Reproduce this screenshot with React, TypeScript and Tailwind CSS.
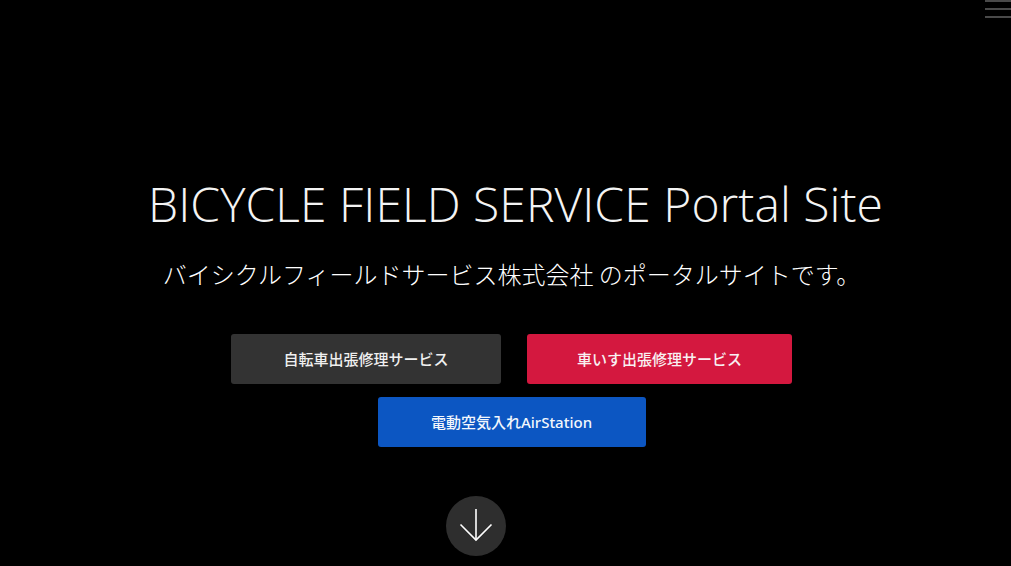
import React from "react";

export default function App() {
  return (
    <div className="relative w-[1011px] h-[566px] overflow-hidden bg-black text-white">
      {/* hamburger */}
      <div className="absolute top-0 right-0 w-[26px] flex flex-col gap-[6px]">
        <div className="h-[2px] bg-[#4a4a4a]" />
        <div className="h-[2px] bg-[#4a4a4a]" />
        <div className="h-[2px] bg-[#4a4a4a]" />
      </div>

      <div className="flex flex-col items-center pt-[180px] pl-[12px]">
        <h1
          className="ml-[8px] text-[48px] leading-[48px] font-light tracking-[0.05px] text-[#f4f4f4]"
          style={{ fontFamily: '"Open Sans", "Noto Sans", sans-serif' }}
        >
          BICYCLE FIELD SERVICE Portal Site
        </h1>
        <p
          className="mt-[34px] text-[24px] leading-[24px] font-light text-white"
          style={{ fontFamily: '"Noto Sans CJK JP", sans-serif' }}
        >
          バイシクルフィールドサービス株式会社 のポータルサイトです。
        </p>

        <div
          className="mt-[48px] flex flex-col items-center gap-[13px] text-[15px] font-medium"
          style={{ fontFamily: '"Noto Sans", "Noto Sans CJK JP", sans-serif' }}
        >
          <div className="flex gap-[26px]">
            <div className="w-[270px] h-[50px] rounded-[3px] bg-[#333333] flex items-center justify-center text-[#f0f0f0]">
              自転車出張修理サービス
            </div>
            <div className="w-[265px] h-[50px] rounded-[3px] bg-[#d4183f] flex items-center justify-center text-[#f8f0f2]">
              車いす出張修理サービス
            </div>
          </div>
          <div className="w-[268px] h-[50px] rounded-[3px] bg-[#0c56c2] flex items-center justify-center text-[#f2f6fc]">
            電動空気入れAirStation
          </div>
        </div>
      </div>

      <div className="mt-[49px] pl-[446px]">
        <div className="w-[60px] h-[60px] rounded-full bg-[#2e2e2e]">
          <svg width="60" height="60" viewBox="0 0 60 60" fill="none" stroke="#ffffff" strokeWidth="1.6">
            <path d="M30 13 V44" />
            <path d="M14.5 28.5 L30 44 L45.5 28.5" />
          </svg>
        </div>
      </div>
    </div>
  );
}
